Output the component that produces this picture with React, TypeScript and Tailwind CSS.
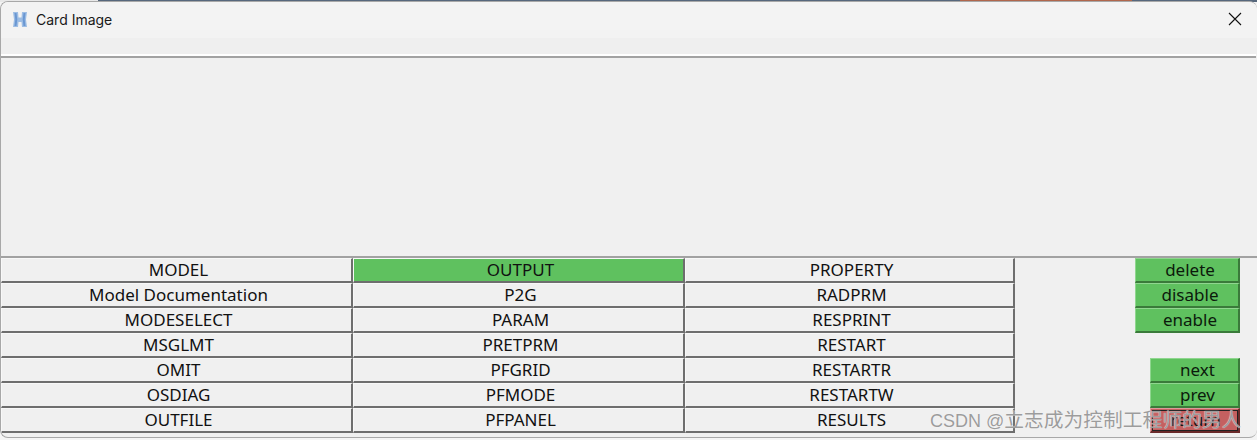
// App.tsx
import React from 'react';

const col1 = ['MODEL', 'Model Documentation', 'MODESELECT', 'MSGLMT', 'OMIT', 'OSDIAG', 'OUTFILE'];
const col2 = ['OUTPUT', 'P2G', 'PARAM', 'PRETPRM', 'PFGRID', 'PFMODE', 'PFPANEL'];
const col3 = ['PROPERTY', 'RADPRM', 'RESPRINT', 'RESTART', 'RESTARTR', 'RESTARTW', 'RESULTS'];

const Cell: React.FC<{ label: string; active?: boolean; width: string }> = ({ label, active, width }) => (
  <div
    className={`${width} h-[25px] pl-1 flex items-center justify-center border border-t-[#f8f8f8] border-l-[#f8f8f8] border-r-2 border-b-2 border-r-[#6e6e6e] border-b-[#6e6e6e] ${
      active ? 'bg-[#5fc15f] border-r-[#3a7a3a] border-b-[#3a7a3a]' : 'bg-[#f0f0f0]'
    }`}
  >
    {label}
  </div>
);

const SideButton: React.FC<{ label: string; width: string }> = ({ label, width }) => (
  <div
    className={`${width} h-[25px] pl-[6px] flex items-center justify-center bg-[#5fc15f] border border-t-[#8fd68f] border-l-[#8fd68f] border-r-2 border-b-2 border-r-[#3a7a3a] border-b-[#3a7a3a] text-[#0c1a0c]`}
  >
    {label}
  </div>
);

const App: React.FC = () => {
  return (
    <div className="relative w-[1257px] h-[440px] overflow-hidden bg-[#f4f4f4] font-['Noto_Sans',sans-serif] text-[17px] text-[#111]">
      {/* desktop showing behind the window */}
      <div className="flex h-[2px]">
        <div className="w-[98px] bg-[#e8e8e8]" />
        <div className="w-[862px] bg-[#56677c]" />
        <div className="w-[172px] bg-[#b0664c]" />
        <div className="flex-1 bg-[#56677c]" />
      </div>

      <div className="absolute inset-x-0 top-[1px] h-[437px] rounded-lg border border-[#a8a8a8] border-r-0 bg-[#f0f0f0] overflow-hidden">
        {/* title bar */}
        <div className="h-[36px] flex items-center bg-[#f3f3f3] pl-[11px] pr-[15px]">
          <svg width="16" height="17" viewBox="0 0 16 17" className="mt-[-1px] blur-[0.6px]">
            <path d="M1 1h5l.5 5.5h3L10 1h5l-1 7.5L15 16h-5l-.5-5h-3L6 16H1l1-7.5z" fill="#9dbde4" />
            <path d="M3.5 2l.8 6.5-.8 6.5M12.5 2l-.8 6.5.8 6.5" stroke="#6a97d2" strokeWidth="2" fill="none" />
          </svg>
          <span className="ml-[8px] mt-[-2px] font-['Inter',sans-serif] text-[14px] text-[#1a1a1a]">Card Image</span>
          <svg width="14" height="14" viewBox="0 0 14 14" className="ml-auto mt-[-3px]">
            <path d="M1 1l12 12M13 1L1 13" stroke="#111" strokeWidth="1.1" fill="none" />
          </svg>
        </div>

        {/* menu strip */}
        <div className="h-[16px] bg-[#efefef]" />
        <div className="h-[2px] mr-[1px] bg-white" />
        <div className="h-[2px] mr-[1px] bg-[#a2a2a2]" />

        {/* empty card area */}
        <div className="h-[198px] bg-[#f0f0f0]" />

        {/* keyword table and actions */}
        <div className="flex border-t-2 border-[#a2a2a2]">
          <div className="flex">
            <div className="flex flex-col">
              {col1.map((label) => (
                <Cell key={label} label={label} width="w-[352px]" />
              ))}
            </div>
            <div className="flex flex-col">
              {col2.map((label) => (
                <Cell key={label} label={label} width="w-[332px]" active={label === 'OUTPUT'} />
              ))}
            </div>
            <div className="flex flex-col">
              {col3.map((label) => (
                <Cell key={label} label={label} width="w-[330px]" />
              ))}
            </div>
          </div>
          <div className="ml-[120px] w-[105px] flex flex-col items-end">
            <SideButton label="delete" width="w-[105px]" />
            <SideButton label="disable" width="w-[105px]" />
            <SideButton label="enable" width="w-[105px]" />
            <div className="h-[25px]" />
            <SideButton label="next" width="w-[90px]" />
            <SideButton label="prev" width="w-[90px]" />
            <div className="w-[90px] h-[25px] pl-[2px] flex items-center justify-center bg-[#c46060] border border-t-[#d99] border-l-[#d99] border-r-2 border-b-2 border-r-[#6a2a2a] border-b-[#6a2a2a] outline outline-1 -outline-offset-3 outline-[#222]">
              return
            </div>
          </div>
        </div>
      </div>

      {/* CSDN watermark */}
      <div className="absolute left-[930px] top-[407px] font-['Liberation_Sans','Noto_Sans_CJK_SC',sans-serif] text-[18px] leading-[26px] whitespace-nowrap text-[#9c9c9c] [text-shadow:0_0_1px_#ffffff]">
        CSDN @<span className="text-[19.75px]">立志成为控制工程师的男人</span>
      </div>
    </div>
  );
};

export default App;
